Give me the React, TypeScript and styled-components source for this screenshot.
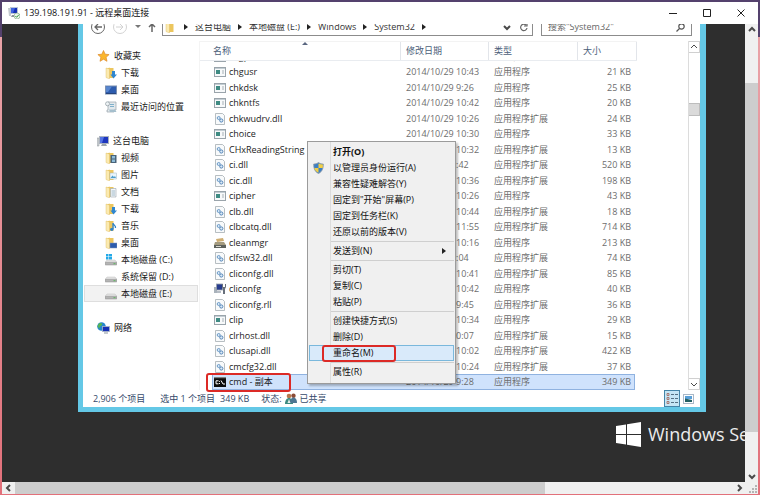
import React from "react";
import styled, { createGlobalStyle, css } from "styled-components";

const GlobalStyle = createGlobalStyle`
  * { box-sizing: border-box; }
  body { margin: 0; overflow: hidden; }
  body, button, input, table {
    font-family: "Open Sans", "Noto Sans CJK SC", sans-serif;
    font-size: 9px;
    line-height: 16px;
  }
  button { border: 0; padding: 0; background: none; color: inherit; }
  svg { display: block; flex: none; }
`;

const Frame = styled.div`
  display: flex;
  flex-direction: column;
  height: 100vh;
  padding: 2px 2px 1px;
  background: linear-gradient(to bottom, #54416d 0, #54416d 37px, #e9a3a8 37px, #e2707a 100%);
`;

const TitleBar = styled.header`
  display: flex;
  flex: none;
  align-items: center;
  height: 22px;
  padding-left: 6px;
  background: #fff;
  color: #111;
`;

const Title = styled.h1`
  flex: 1;
  margin: 0 0 0 4px;
  font-size: 9px;
  font-weight: 400;
  white-space: nowrap;
`;

const WindowButton = styled.button`
  display: grid;
  place-items: center;
  width: 34px;
  height: 22px;
`;

const Body = styled.div`
  flex: 1;
  min-height: 0;
  display: grid;
  grid-template: minmax(0, 1fr) 12px / minmax(0, 1fr) 13px;
`;

const Desktop = styled.main`
  position: relative;
  display: flex;
  flex-direction: column;
  overflow: hidden;
  background: #2e2e2e;
`;

const Explorer = styled.section`
  flex: 1;
  min-height: 0;
  display: flex;
  flex-direction: column;
  margin: 0 39px 0 76px;
  border: solid #64c8e6;
  border-width: 0 6px 5px 5px;
  background: #fff;
`;

const NavClip = styled.div`
  flex: none;
  display: flex;
  flex-direction: column;
  justify-content: flex-end;
  height: 12px;
  overflow: hidden;
`;

const NavBar = styled.nav`
  flex: none;
  display: flex;
  align-items: center;
  height: 18px;
  padding: 0 8px;
  color: #333;
`;

const NavButton = styled.button<{ $w: number }>`
  display: grid;
  place-items: center;
  flex: none;
  width: ${(p) => p.$w}px;
  height: 18px;
`;

const Address = styled.div`
  flex: 1;
  display: flex;
  align-items: center;
  gap: 7px;
  height: 18px;
  padding-left: 2px;
  margin-right: 8px;
  border: 1px solid #8c8c8c;
`;

const Crumb = styled.button`
  white-space: nowrap;
`;

const AddressTools = styled.span`
  display: flex;
  margin-left: auto;
`;

const Spacer = styled.span`
  flex: 1;
`;

const Search = styled.label`
  display: flex;
  align-items: center;
  width: 151px;
  height: 18px;
  padding: 0 6px;
  border: 1px solid #8c8c8c;
  input {
    flex: 1;
    min-width: 0;
    padding: 0;
    border: 0;
    outline: 0;
    background: none;
    color: #555;
    &::placeholder { color: #666; opacity: 1; }
  }
`;

const Panes = styled.div`
  flex: 1;
  min-height: 0;
  display: flex;
  margin-top: 5px;
`;

const Sidebar = styled.aside`
  flex: none;
  width: 117px;
  padding: 6px 1px 0;
  border-right: 1px solid #f4f4f4;
`;

const TreeGroup = styled.ul`
  margin: 0 0 17px;
  padding: 0;
  list-style: none;
`;

const TreeItem = styled.button<{ $root?: boolean; $active?: boolean }>`
  display: flex;
  align-items: center;
  gap: 4px;
  width: 100%;
  height: 17px;
  padding-left: ${(p) => (p.$root ? 13 : 21)}px;
  color: #1a1a1a;
  white-space: nowrap;
  ${(p) => p.$active && css`
    background: #f2f2f2;
    box-shadow: inset 0 0 0 1px #dedede;
  `}
`;

const FileTable = styled.table`
  flex: 1;
  min-width: 0;
  display: flex;
  flex-direction: column;
  border-spacing: 0;
`;

const HeadRow = styled.tr`
  position: relative;
  display: grid;
  grid-template-columns: minmax(0, 1fr) 88px 89px 59px;
  height: 20px;
  margin-right: 51px;
  border-bottom: 1px solid #e9ecf0;
  border-top: 1px solid #f3f3f3;
  th {
    padding: 1px 5px 0;
    border-right: 1px solid #e2e5ea;
    color: #4c607a;
    font-weight: 400;
    text-align: left;
  }
  th:first-child { padding-left: 13px; }
`;

const SortMark = styled.svg`
  position: absolute;
  left: 102px;
  top: 0;
`;

const ClippedHead = styled.tbody`
  display: flex;
  flex-direction: column;
  justify-content: flex-end;
  height: 3px;
  overflow: hidden;
  line-height: 14px;
`;

const Rows = styled.tbody`
  flex: 1;
  min-height: 0;
  display: grid;
  grid-auto-rows: minmax(0, 1fr);
`;

const FileRow = styled.tr<{ $selected?: boolean }>`
  position: relative;
  display: grid;
  flex: none;
  align-items: center;
  grid-template-columns: minmax(0, 1fr) 88px 89px 57px;
  margin: 0 53px 0 12px;
  color: #6d6d6d;
  white-space: nowrap;
  td { padding: 0 5px; }
  td:last-child { text-align: right; padding-right: 4px; }
  ${(p) => p.$selected && css`
    background: #cfe2fc;
    box-shadow: inset 0 0 0 1px #8fb2e0;
  `}
`;

const NameCell = styled.span`
  display: flex;
  align-items: center;
  gap: 3px;
  margin-left: -3px;
  color: #1c1c1c;
`;

const Callout = styled.span<{ $box: string; $width: number }>`
  position: absolute;
  inset: ${(p) => p.$box};
  width: ${(p) => p.$width}px;
  border: 2px solid #dc2a26;
  border-radius: 3px;
  pointer-events: none;
  z-index: 1;
`;

const ListScroll = styled.div`
  flex: none;
  display: flex;
  flex-direction: column;
  width: 12px;
  border-left: 1px solid #dcdcdc;
`;

const ListScrollButton = styled.button`
  display: grid;
  place-items: center;
  height: 12px;
  border: 1px solid #d0d0d0;
  border-left: 0;
`;

const ListThumb = styled.div`
  height: 13px;
  margin: 50px 0 auto;
  border: 1px solid #bdbdbd;
  border-left: 0;
  background: #dadada;
`;

const StatusBar = styled.footer`
  flex: none;
  display: flex;
  align-items: center;
  height: 17px;
  padding: 0 4px 0 10px;
  color: #34496a;
  white-space: nowrap;
`;

const StatusItem = styled.span<{ $gap: number }>`
  display: flex;
  align-items: center;
  gap: 3px;
  margin-right: ${(p) => p.$gap}px;
`;

const ViewButton = styled.button<{ $active?: boolean }>`
  display: grid;
  place-items: center;
  width: 16px;
  height: 17px;
  ${(p) => p.$active && css`
    background: #c5e6f5;
    box-shadow: inset 0 0 0 1px #4585a8;
  `}
`;

const Brand = styled.div`
  flex: none;
  display: flex;
  justify-content: flex-end;
  height: 70px;
  padding-top: 9px;
`;

const BrandMark = styled.div`
  display: flex;
  align-items: center;
  gap: 7px;
  width: 129px;
  height: 26px;
  overflow: hidden;
  color: #ececec;
  font-size: 18px;
  font-weight: 400;
  line-height: 26px;
  white-space: nowrap;
`;

const Menu = styled.div`
  position: absolute;
  left: 305px;
  top: 117px;
  width: 149px;
  padding: 2px 1px 3px;
  border: 1px solid #9b9b9b;
  background: linear-gradient(to right, #f0f0f0 22px, #dcdcdc 22px, #dcdcdc 23px, #f0f0f0 23px);
  box-shadow: 2px 2px 2px rgba(0, 0, 0, 0.25);
`;

const MenuItem = styled.button<{ $strong?: boolean; $active?: boolean }>`
  position: relative;
  display: grid;
  grid-template-columns: 20px 1fr 12px;
  align-items: center;
  width: 100%;
  height: 16px;
  padding-left: 4px;
  color: #111;
  font-weight: ${(p) => (p.$strong ? 700 : 400)};
  text-align: left;
  white-space: nowrap;
  ${(p) => p.$active && css`
    background: #d9eafa;
    box-shadow: inset 0 0 0 1px #7ab8dc;
  `}
`;

const Separator = styled.hr`
  height: 1px;
  margin: 1px 0 1px 22px;
  border: 0;
  background: #cfcfcf;
`;

const VScroll = styled.div`
  display: flex;
  flex-direction: column;
  background: #f0f0f0;
`;

const HScroll = styled.div`
  display: flex;
  background: #f0f0f0;
`;

const ScrollButton = styled.button`
  display: grid;
  place-items: center;
  flex: none;
  width: 13px;
  height: 12px;
`;

const VThumb = styled.div`
  flex: 1;
  margin-top: 47px;
  margin-bottom: 38px;
  background: #cdcdcd;
`;

const HThumb = styled.div`
  flex: 530;
  background: #cdcdcd;
`;

const HRest = styled.div`
  flex: 187;
`;

const Corner = styled.div`
  display: grid;
  place-items: end;
  background: #f0f0f0;
`;

type Dir = "up" | "down" | "left" | "right";
const chevrons: Record<Dir, string> = {
  up: "M1 5 4 2 7 5",
  down: "M1 3 4 6 7 3",
  left: "M5 1 2 4 5 7",
  right: "M3 1 6 4 3 7",
};
const Chevron = ({ dir, weight = 2 }: { dir: Dir; weight?: number }) => (
  <svg width="8" height="8" fill="none" stroke="#4a4a4a" strokeWidth={weight}><path d={chevrons[dir]} /></svg>
);

const Triangle = () => (
  <svg width="4" height="6"><path d="M0 0 4 3 0 6z" fill="#222" /></svg>
);

const crumbs = ["这台电脑", "本地磁盘 (E:)", "Windows", "System32"];

const RemoteIcon = () => (
  <svg width="12" height="12" viewBox="0 0 12 12">
    <path d="M0 1h3v8H1z" fill="#c4cad0" />
    <rect x="2" y="0" width="8" height="7" fill="#b9c3d6" />
    <rect x="3" y="1" width="6" height="5" fill="#1730b4" />
    <path d="M3 1h4L5 6H3z" fill="#3f63df" />
    <path d="M4 8h5v2H3z" fill="#8b949c" />
    <circle cx="9" cy="9" r="3" fill="#eef5ec" stroke="#7aa37c" strokeWidth=".6" />
    <path d="m7.4 9 1.2 1.3L11 7.6" fill="none" stroke="#2f9a3b" />
  </svg>
);

const Folder = ({ children }: { children?: React.ReactNode }) => (
  <svg width="12" height="12" viewBox="0 0 12 12">
    <path d="M1 1.5 5 .5v10.7L1 10z" fill="#f6dc86" />
    <path d="M3 1h5.5v10H3z" fill="#ecc65e" />
    <path d="M1 1 4.5 2V12L1 10.5z" fill="#fbeab0" stroke="#dcb95d" strokeWidth=".4" />
    {children}
  </svg>
);

const Monitor = () => (
  <svg width="12" height="12" viewBox="0 0 12 12">
    <path d="M0 3h2v8H0z" fill="#d0d4d8" stroke="#8d949b" strokeWidth=".5" />
    <rect x="2.5" y="1.5" width="9" height="7" fill="#1d36be" stroke="#aab2bf" />
    <path d="M3 2h4L5 8H3z" fill="#5474e4" />
    <path d="M5 9h4l1 2H4z" fill="#9ca4ab" />
  </svg>
);

const Drive = ({ system }: { system?: boolean }) => (
  <svg width="12" height="12" viewBox="0 0 12 12">
    {system && <path d="M1 0h2.5v2.5H1zM4 0h3v2.5H4zM1 3h2.5v2.5H1zM4 3h3v2.5H4z" fill="#23a9e8" />}
    <path d="M2 6h8l2 2.5v1H0v-1z" fill="#e4e4e4" stroke="#b0b0b0" strokeWidth=".4" />
    <path d="M.3 8.3h11.4v2.7H.3z" fill="#b4b4b4" stroke="#8c8c8c" strokeWidth=".5" />
    <path d="M8.5 9.7h2" stroke="#5cb85c" />
  </svg>
);

const treeIcons: Record<string, React.ReactNode> = {
  star: (
    <svg width="13" height="12" viewBox="0 0 12 12"><path d="m6 .5 1.6 3.7 4 .4-3 2.7.9 4L6 9.2l-3.5 2.1.9-4-3-2.7 4-.4z" fill="#fbb62d" stroke="#dc8a2a" strokeWidth=".7" /></svg>
  ),
  download: <Folder><path d="M7 4h3v3.5h2L8.5 11.5 5.5 7.5H7z" fill="#2f86cf" /></Folder>,
  screen: (
    <svg width="12" height="12" viewBox="0 0 12 12"><rect x=".5" y="2" width="11" height="8" fill="#2d5cae" stroke="#7b8fb0" /><path d="M1 2.5h6L3 8H1z" fill="#5886cf" /><path d="M1 9.5h10" stroke="#27457c" /></svg>
  ),
  recent: (
    <svg width="12" height="12" viewBox="0 0 12 12"><path d="M3 1h8v8H9v2H2V9h1z" fill="#e2e8ec" stroke="#9aa5ad" strokeWidth=".7" /><circle cx="2.5" cy="2.8" r="2" fill="#eef3f5" stroke="#8c989f" strokeWidth=".7" /><path d="M5 3.5h4M5 5.5h4" stroke="#7eb0cb" /><path d="M4 8.5h6l1.5 2.5H5z" fill="#a5bfcd" /></svg>
  ),
  pc: <Monitor />,
  video: <Folder><rect x="5.5" y="3" width="6" height="8" fill="#49637a" /><path d="M7 4h3v2.5H7zM7 7.5h3V10H7z" fill="#8dbbd8" /></Folder>,
  picture: <Folder><rect x="5" y="4" width="6.5" height="6" fill="#eaf5fb" stroke="#9bb3c0" strokeWidth=".5" /><path d="m5.5 9 2-2.5L9 8l1-1 1 2z" fill="#4e9ecb" /></Folder>,
  document: <Folder><path d="M5.5 2.5H11V11H5.5z" fill="#f3f6f8" stroke="#9aa6ae" strokeWidth=".6" /><path d="M6.5 5H10M6.5 7H10M6.5 9H10" stroke="#7fa0b8" strokeWidth=".7" /></Folder>,
  music: <Folder><path d="M8 3v6M8 3c0 2 3 2 2.5 5" fill="none" stroke="#2d82c9" strokeWidth="1.3" /><ellipse cx="6.8" cy="9.5" rx="1.7" ry="1.4" fill="#2d82c9" /></Folder>,
  deskfolder: <Folder><rect x="5" y="6" width="7" height="5" fill="#2d5cae" stroke="#8498b8" strokeWidth=".5" /></Folder>,
  system: <Drive system />,
  drive: <Drive />,
  network: (
    <svg width="13" height="12" viewBox="0 0 13 12"><circle cx="4.5" cy="4.5" r="4.3" fill="#2687cf" /><path d="M2 1.5c2-1 4 0 3 1.5S2.5 4 2.5 6 1 5 .5 4z" fill="#55b553" /><rect x="5.5" y="4.5" width="7" height="5" fill="#1730b4" stroke="#a9b4c4" strokeWidth=".8" /><path d="M7 10.5h4v1H7z" fill="#8a949d" /></svg>
  ),
};

const tree = [
  [["star", "收藏夹"], ["download", "下载"], ["screen", "桌面"], ["recent", "最近访问的位置"]],
  [["pc", "这台电脑"], ["video", "视频"], ["picture", "图片"], ["document", "文档"], ["download", "下载"], ["music", "音乐"],
    ["deskfolder", "桌面"], ["system", "本地磁盘 (C:)"], ["drive", "系统保留 (D:)"], ["drive", "本地磁盘 (E:)"]],
  [["network", "网络"]],
];

const fileIcons: Record<string, React.ReactNode> = {
  exe: (
    <svg width="12" height="10" viewBox="0 0 12 10"><rect x=".5" y=".5" width="11" height="9" fill="#f7f9fa" stroke="#9aa4ab" /><path d="M1 1.5h10" stroke="#c3cdd3" /><rect x="2" y="3" width="4" height="4" fill="#3f8b83" /><path d="M8 4h2M8 6h2" stroke="#a8b1b7" /></svg>
  ),
  dll: (
    <svg width="12" height="12" viewBox="0 0 12 12"><path d="M1.5.5h7l2 2v9h-9z" fill="#f8fafb" stroke="#a6adb3" strokeWidth=".8" /><circle cx="4.7" cy="5" r="1.5" fill="#dcebf7" stroke="#6b9ac8" /><circle cx="7.3" cy="7.5" r="1.6" fill="#dcebf7" stroke="#5384b8" /></svg>
  ),
  clean: (
    <svg width="12" height="12" viewBox="0 0 12 12"><path d="M2 2 9 1l1 3-7 1z" fill="#cfae72" /><path d="M1 5h9l2 3H0z" fill="#a49b80" /><path d="M0 8h12v3H0z" fill="#5e625d" /><path d="M2 9.5h5" stroke="#d8d8cf" /></svg>
  ),
  config: (
    <svg width="12" height="12" viewBox="0 0 12 12"><path d="M0 4h3v6H0z" fill="#a9b2bb" /><rect x="2.5" y="1" width="6" height="6" fill="#263c8e" stroke="#98a0ac" strokeWidth=".8" /><path d="M8 1v3l1 2v5h2V6l1-2V1h-1v3H9V1z" fill="#68707c" /><path d="M3 8h4v2H3z" fill="#b6bdc5" /></svg>
  ),
  cmd: (
    <svg width="12" height="10" viewBox="0 0 12 10"><rect width="12" height="10" fill="#0b0b0b" /><path d="M0 .7h12" stroke="#9a9a9a" /><path d="M4.5 3.8H2v3h2.5M5.5 4v.8M5.5 6v1M7 3.5l2 3.5M9 7h2" fill="none" stroke="#fff" /></svg>
  ),
};

const APP = "应用程序";
const EXT = "应用程序扩展";
type Entry = [string, string, string, string, string];
const files: Entry[] = [
  ["exe", "chgusr", "2014/10/29 10:43", APP, "21 KB"],
  ["exe", "chkdsk", "2014/10/29 9:26", APP, "25 KB"],
  ["exe", "chkntfs", "2014/10/29 10:42", APP, "20 KB"],
  ["dll", "chkwudrv.dll", "2014/10/29 10:26", EXT, "24 KB"],
  ["exe", "choice", "2014/10/29 10:30", APP, "33 KB"],
  ["dll", "CHxReadingString", "2014/10/29 10:32", EXT, "13 KB"],
  ["dll", "ci.dll", "2014/9/29 3:42", EXT, "520 KB"],
  ["dll", "cic.dll", "2014/10/29 10:36", EXT, "198 KB"],
  ["exe", "cipher", "2014/10/29 10:26", APP, "43 KB"],
  ["dll", "clb.dll", "2014/10/29 10:44", EXT, "18 KB"],
  ["dll", "clbcatq.dll", "2014/10/29 11:55", EXT, "714 KB"],
  ["clean", "cleanmgr", "2014/10/29 10:16", APP, "213 KB"],
  ["dll", "clfsw32.dll", "2014/9/29 9:04", EXT, "74 KB"],
  ["dll", "cliconfg.dll", "2014/10/29 10:41", EXT, "85 KB"],
  ["config", "cliconfg", "2014/10/29 10:42", APP, "40 KB"],
  ["dll", "cliconfg.rll", "2014/10/29 9:45", EXT, "36 KB"],
  ["exe", "clip", "2014/10/29 10:34", APP, "29 KB"],
  ["dll", "clrhost.dll", "2014/9/29 20:07", EXT, "15 KB"],
  ["dll", "clusapi.dll", "2014/10/29 10:02", EXT, "422 KB"],
  ["dll", "cmcfg32.dll", "2014/10/29 10:24", EXT, "37 KB"],
  ["cmd", "cmd - 副本", "2014/10/29 9:28", APP, "349 KB"],
];

const menuGroups = [
  ["打开(O)", "以管理员身份运行(A)", "兼容性疑难解答(Y)", "固定到\"开始\"屏幕(P)", "固定到任务栏(K)", "还原以前的版本(V)"],
  ["发送到(N)"],
  ["剪切(T)", "复制(C)", "粘贴(P)"],
  ["创建快捷方式(S)", "删除(D)", "重命名(M)"],
  ["属性(R)"],
];

const Shield = () => (
  <svg width="11" height="12" viewBox="0 0 11 12">
    <path d="M5.5.5C4 1.5 2.5 2 .7 2c0 4 .8 7.5 4.8 9.5 4-2 4.8-5.500 4.8-9.5C8.5 2 7 1.5 5.5.5z" fill="#3d7fc4" stroke="#8d98a3" strokeWidth=".8" />
    <path d="M5.5 1.5V6h4.2c.2-1 .2-2 .2-3.5-1.600 0-3-.3-4.400-1zM5.500 6v4.800C3 9.600 1.800 8 1.400 6z" fill="#f2cf45" />
  </svg>
);

function FileEntry({ entry, selected }: { entry: Entry; selected?: boolean }) {
  const [icon, name, date, type, size] = entry;
  return (
    <FileRow $selected={selected}>
      <td>
        <NameCell>{fileIcons[icon]}{name}</NameCell>
        {selected && <Callout $box="-1px auto -2px -6px" $width={85} />}
      </td>
      <td>{date}</td>
      <td>{type}</td>
      <td>{size}</td>
    </FileRow>
  );
}

export default function App() {
  return (
    <Frame>
      <GlobalStyle />
      <TitleBar>
        <RemoteIcon />
        <Title>139.198.191.91 - 远程桌面连接</Title>
        <WindowButton aria-label="最小化"><svg width="8" height="8" stroke="#222"><path d="M0 4.5h8" /></svg></WindowButton>
        <WindowButton aria-label="最大化"><svg width="8" height="8" fill="none" stroke="#222"><path d="M.5.5h7v7h-7z" /></svg></WindowButton>
        <WindowButton aria-label="关闭"><svg width="8" height="8" stroke="#222"><path d="m.5.5 7 7m0-7-7 7" /></svg></WindowButton>
      </TitleBar>
      <Body>
        <Desktop>
          <Explorer>
            <NavClip>
              <NavBar>
                <NavButton $w={14} aria-label="后退"><svg width="14" height="14" fill="none" stroke="#666"><circle cx="7" cy="7" r="6.5" /><path d="M11 7H4m3-3L4 7l3 3" strokeWidth="1.3" /></svg></NavButton>
                <NavButton $w={29} aria-label="前进"><svg width="14" height="14" fill="none" stroke="#d2d2d2"><circle cx="7" cy="7" r="6.5" /><path d="M3 7h7M7 4l3 3-3 3" /></svg></NavButton>
                <NavButton $w={7} aria-label="最近浏览的位置"><svg width="6" height="4"><path d="M0 0h6L3 3z" fill="#777" /></svg></NavButton>
                <NavButton $w={21} aria-label="向上"><svg width="8" height="10" fill="none" stroke="#666" strokeWidth="1.5"><path d="M4 10V2M1 5l3-3 3 3" /></svg></NavButton>
                <Address>
                  <Folder />
                  <Triangle />
                  {crumbs.map((label) => (
                    <React.Fragment key={label}>
                      <Crumb>{label}</Crumb>
                      <Triangle />
                    </React.Fragment>
                  ))}
                  <AddressTools>
                    <NavButton $w={16} aria-label="展开地址"><Chevron dir="down" /></NavButton>
                    <NavButton $w={17} aria-label="刷新"><svg width="8" height="9" fill="none" stroke="#666" strokeWidth="1.2"><path d="M6 2a3.2 3.2 0 1 0 1 3M7 0v3H4" /></svg></NavButton>
                  </AddressTools>
                </Address>
                <Search>
                  <input aria-label="搜索" placeholder={'搜索"System32"'} />
                  <svg width="9" height="9" fill="none" stroke="#555" strokeWidth="1.2"><circle cx="5.5" cy="3.5" r="2.7" /><path d="M3.5 5.5.5 8.5" /></svg>
                </Search>
              </NavBar>
            </NavClip>
            <Panes>
              <Sidebar>
                {tree.map((group, g) => (
                  <TreeGroup key={g}>
                    {group.map(([icon, label], i) => (
                      <li key={label}>
                        <TreeItem $root={i === 0} $active={i === 9}>{treeIcons[icon]}{label}</TreeItem>
                      </li>
                    ))}
                  </TreeGroup>
                ))}
              </Sidebar>
              <FileTable>
                <thead>
                  <HeadRow>
                    <th>名称<SortMark width="6" height="4"><path d="M0 3 3 0l3 3z" fill="#5a6680" /></SortMark></th>
                    <th>修改日期</th>
                    <th>类型</th>
                    <th>大小</th>
                  </HeadRow>
                </thead>
                <ClippedHead><FileEntry entry={["exe", "chgport", "2014/10/29 10:43", APP, "21 KB"]} /></ClippedHead>
                <Rows>
                  {files.map((f) => <FileEntry key={f[1]} entry={f} selected={f[0] === "cmd"} />)}
                </Rows>
              </FileTable>
              <ListScroll>
                <ListScrollButton aria-label="向上滚动"><Chevron dir="up" weight={1} /></ListScrollButton>
                <ListThumb />
                <ListScrollButton aria-label="向下滚动"><Chevron dir="down" weight={1} /></ListScrollButton>
              </ListScroll>
            </Panes>
            <StatusBar>
              <StatusItem $gap={15}>2,906 个项目</StatusItem>
              <StatusItem $gap={5}>选中 1 个项目</StatusItem>
              <StatusItem $gap={12}>349 KB</StatusItem>
              <StatusItem $gap={0}>
                状态:
                <svg width="12" height="12" viewBox="0 0 12 12"><circle cx="4" cy="3" r="2.3" fill="#b5794e" /><path d="M0 11c0-4 2-6 4-6s4 2 4 6z" fill="#3c8a80" /><circle cx="8.5" cy="2.7" r="2.2" fill="#8c4b35" /><path d="M5 10c0-4 2-5.5 3.5-5.5S12 6 12 10z" fill="#4d7692" /><path d="m4 6 1.5 4h-3z" fill="#e5ece8" /></svg>
                已共享
              </StatusItem>
              <Spacer />
              <ViewButton $active aria-label="详细信息"><svg width="12" height="11" fill="none" stroke="#557184"><path d="M5 1.5h3m1 0h3M5 5.5h3m1 0h3M5 9.5h3m1 0h3" /><path d="M1 .5h2v2H1zM1 4.5h2v2H1zM1 8.5h2v2H1z" stroke="#a87873" /></svg></ViewButton>
              <ViewButton aria-label="大图标"><svg width="11" height="10"><rect x=".5" y=".5" width="10" height="9" fill="#fff" stroke="#a9b8c8" /><path d="M2 2h7v3H2z" fill="#5aa0d8" /><path d="M2 4.5 9 6v2H2z" fill="#235f63" /></svg></ViewButton>
            </StatusBar>
          </Explorer>
          <Brand>
            <BrandMark>
              <svg width="25" height="25" viewBox="0 0 25 25"><path d="M0 4 10 2.5V12H0zM11 2.3 25 0v12H11zM0 13h10v9.5L0 21zM11 13h14v12l-14-2.3z" fill="#fff" /></svg>
              Windows Server
            </BrandMark>
          </Brand>
          <Menu role="menu">
            {menuGroups.map((group, g) => (
              <React.Fragment key={g}>
                {g > 0 && <Separator />}
                {group.map((label, i) => {
                  const rename = label.startsWith("重命名");
                  return (
                    <MenuItem key={label} role="menuitem" $strong={g === 0 && i === 0} $active={rename}>
                      <span>{g === 0 && i === 1 && <Shield />}</span>
                      <span>{label}</span>
                      {g === 1 && <Triangle />}
                      {rename && <Callout $box="0 auto -1px 13px" $width={74} />}
                    </MenuItem>
                  );
                })}
              </React.Fragment>
            ))}
          </Menu>
        </Desktop>
        <VScroll>
          <ScrollButton aria-label="上"><Chevron dir="up" /></ScrollButton>
          <VThumb />
          <ScrollButton aria-label="下"><Chevron dir="down" /></ScrollButton>
        </VScroll>
        <HScroll>
          <ScrollButton aria-label="左"><Chevron dir="left" /></ScrollButton>
          <HThumb />
          <HRest />
          <ScrollButton aria-label="右"><Chevron dir="right" /></ScrollButton>
        </HScroll>
        <Corner><svg width="9" height="9" fill="#b4b4b4"><path d="M6 0h2v2H6zM3 3h2v2H3zM6 3h2v2H6zM0 6h2v2H0zM3 6h2v2H3zM6 6h2v2H6z" /></svg></Corner>
      </Body>
    </Frame>
  );
}
